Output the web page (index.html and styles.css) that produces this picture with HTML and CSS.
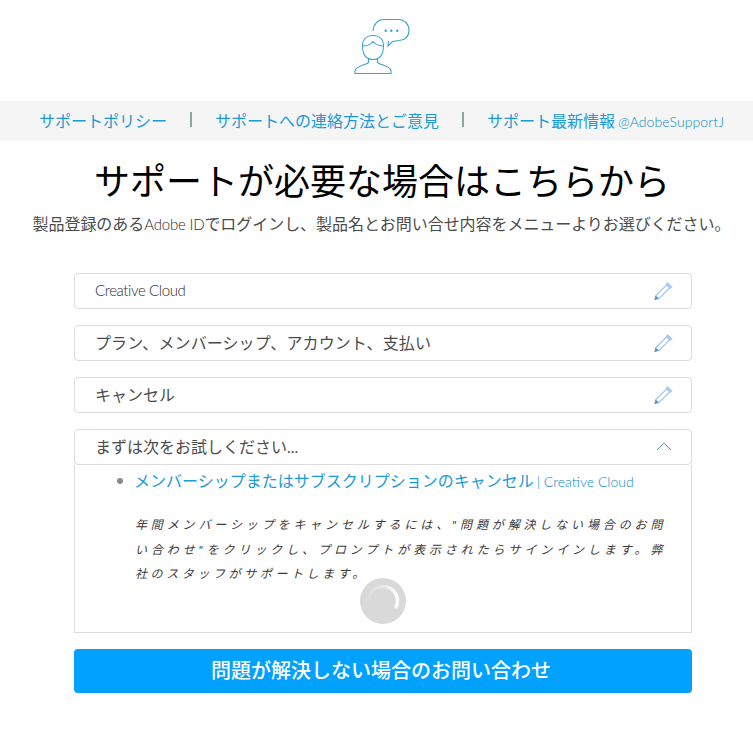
FILE: index.html
```html
<!DOCTYPE html>
<html lang="ja">
  <head>
    <meta charset="UTF-8" />
    <meta name="viewport" content="width=device-width, initial-scale=1.0" />
    <title>サポート</title>
    <link rel="stylesheet" href="styles.css">
  </head>
  <body>
    <div class="top-icon">
      <svg width="58" height="58" viewBox="0 0 58 58" fill="none" stroke="#3ba3d0" stroke-width="1.1">
        <!-- speech bubble -->
        <path d="M20 13 C20.5 6 25 1.5 31 1.5 L45 1.5 C52 1.5 56 6.5 56 12.5 C56 19 51.5 22.5 46 22.5 L39.5 23.5 L35 28 L35.5 23" />
        <!-- head and hair -->
        <path d="M14.5 40 C11 38 9.5 33 9.5 28 C9.5 21.5 13.5 17.5 20 17.5 C26.5 17.5 30.5 21.5 30.5 28 C30.5 33 29 38 25.5 40 C23 42 17 42 14.5 40 Z" />
        <path d="M9.5 28 C13.5 28 17.5 26.5 20 23.5 C22.5 26.5 26.5 28 30.5 28" />
        <!-- shoulders -->
        <path d="M15.5 41 L15.5 44.5 C12.5 47.5 2.5 47.5 2 53 L2 55.5 L38 55.5 L38 53 C37.5 47.5 27.5 47.5 24.5 44.5 L24.5 41" />
        <circle cx="32.7" cy="12.7" r="1.2" fill="#3ba3d0" stroke="none" />
        <circle cx="38.3" cy="12.7" r="1.2" fill="#3ba3d0" stroke="none" />
        <circle cx="44.3" cy="12.7" r="1.2" fill="#3ba3d0" stroke="none" />
      </svg>
    </div>

    <div class="nav-bar">
      <a class="nav-link">サポートポリシー</a>
      <span class="nav-sep"></span>
      <a class="nav-link">サポートへの連絡方法とご意見</a>
      <span class="nav-sep"></span>
      <a class="nav-link">サポート最新情報<span class="nav-small">@AdobeSupportJ</span></a>
    </div>

    <h1 class="title">サポートが必要な場合はこちらから</h1>
    <p class="subtitle">製品登録のある<span class="subtitle-latin">Adobe ID</span>でログインし、製品名とお問い合せ内容をメニューよりお選びください。</p>

    <div class="form">
      <div class="field">
        <span class="field-latin">Creative Cloud</span>
        <svg width="20" height="20"><use href="#pencil-icon" /></svg>
      </div>
      <div class="field">
        <span class="field-wide">プラン、メンバーシップ、アカウント、支払い</span>
        <svg width="20" height="20"><use href="#pencil-icon" /></svg>
      </div>
      <div class="field">
        <span>キャンセル</span>
        <svg width="20" height="20"><use href="#pencil-icon" /></svg>
      </div>

      <div class="accordion">
        <div class="field field-open">
          <span>まずは次をお試しください...</span>
          <svg width="16" height="9" viewBox="0 0 16 9" fill="none" stroke="#5f96d8" stroke-width="1"><path d="M1 8 L8 1 L15 8" /></svg>
        </div>
        <div class="panel">
          <ul class="result-list">
            <li class="result-item">
              <a class="result-link">メンバーシップまたはサブスクリプションのキャンセル<span class="result-small">| Creative Cloud</span></a>
              <p class="result-text">年間メンバーシップをキャンセルするには、"問題が解決しない場合のお問い合わせ"をクリックし、プロンプトが表示されたらサインインします。弊社のスタッフがサポートします。</p>
            </li>
          </ul>
          <div class="spinner">
            <svg width="46" height="46" viewBox="0 0 46 46" fill="none">
              <defs>
                <linearGradient id="arc-fade" x1="0" y1="0" x2="1" y2="0">
                  <stop offset="0" stop-color="#fff" stop-opacity="0.1" />
                  <stop offset="0.55" stop-color="#fff" stop-opacity="0.45" />
                  <stop offset="1" stop-color="#fff" stop-opacity="1" />
                </linearGradient>
              </defs>
              <path d="M8.5 22 C8.5 14 15 8.5 23 8.5 C31 8.5 37.5 15 37.5 23 C37.5 25.5 37 28 35.5 30" stroke="url(#arc-fade)" stroke-width="3.5" />
            </svg>
          </div>
        </div>
      </div>

      <button class="submit">問題が解決しない場合のお問い合わせ</button>
    </div>

    <svg class="defs" width="0" height="0">
      <symbol id="pencil-icon" viewBox="0 0 20 20">
        <path d="M3 14.5 L14 3.5 L17 6.5 L6 17.5 L2 18.5 Z" fill="#fff" stroke="#a3c4f0" stroke-width="1.2" />
        <path d="M14.5 1 L19.5 6 L17 8 L12.5 3.5 Z" fill="#a9c8f5" />
        <path d="M1.5 19 L2.5 14.5 L6 17.5 Z" fill="#5b8fd6" />
      </symbol>
    </svg>
  </body>
</html>
```

FILE: styles.css
```css
* {
  box-sizing: border-box;
}
body {
  margin: 0;
  background-color: white;
  font-family: "Lato", "Noto Sans CJK JP", sans-serif;
  color: #4b4b4b;
}
.top-icon {
  height: 101px;
  padding: 18px 0 0 11px;
  display: flex;
  justify-content: center;
}
.nav-bar {
  height: 40px;
  padding: 0 0 3px 10px;
  background-color: #f5f5f5;
  display: flex;
  justify-content: center;
  align-items: center;
  gap: 23px;
  font-size: 16px;
}
.nav-link {
  color: #1a9ad6;
  white-space: nowrap;
}
.nav-small {
  margin-left: 3px;
  font-size: 14px;
  font-weight: 300;
  letter-spacing: 0.1px;
  color: #0a8bca;
}
.nav-sep {
  width: 2px;
  height: 15px;
  background-color: #7fae9f;
}
.title {
  margin: 17px 0 0;
  padding-left: 11px;
  text-align: center;
  font-size: 36px;
  font-weight: 400;
  line-height: 46px;
  color: black;
}
.subtitle {
  margin: 8px 0 0;
  padding-left: 10px;
  text-align: center;
  font-size: 16px;
  line-height: 24px;
  letter-spacing: -0.05px;
}
.subtitle-latin {
  font-size: 15px;
  font-weight: 300;
  letter-spacing: -0.2px;
  color: #2c2c2c;
}
.form {
  margin: 37px 61px 0 74px;
  display: flex;
  flex-direction: column;
  gap: 16px;
}
.field {
  height: 36px;
  padding: 0 18px 3px 20px;
  border: 1px solid #dcdcdc;
  border-radius: 4px;
  display: flex;
  justify-content: space-between;
  align-items: center;
  font-size: 16px;
}
.field svg {
  margin-top: 3px;
}
.field-latin {
  font-size: 15px;
  font-weight: 300;
  letter-spacing: -0.4px;
  color: #2c2c2c;
}
.field-wide {
  letter-spacing: 0.1px;
}
.field-open {
  padding-right: 19px;
}
.field-open svg {
  margin-top: 2px;
}
.panel {
  position: relative;
  height: 168px;
  padding-top: 4px;
  border: 1px solid #dcdcdc;
  border-top: 0;
}
.result-list {
  margin: 0;
  padding: 0 25px 0 59px;
  list-style: none;
}
.result-item {
  position: relative;
}
.result-item::before {
  content: "";
  position: absolute;
  left: -17px;
  top: 9px;
  width: 6px;
  height: 6px;
  border-radius: 50%;
  background-color: #8a8a8a;
}
.result-link {
  color: #1a9ad6;
  font-size: 16px;
  line-height: 24px;
}
.result-small {
  margin-left: 3px;
  font-size: 14px;
  font-weight: 300;
  color: #0a8bca;
}
.result-text {
  margin: 19px 0 0 1px;
  font-size: 12px;
  font-style: italic;
  line-height: 24.5px;
  letter-spacing: 3.6px;
  text-align: justify;
  color: #3a3a3a;
}
.spinner {
  position: absolute;
  left: 285px;
  top: 113px;
  width: 46px;
  height: 46px;
  border-radius: 50%;
  background-color: #d9d9d9;
}
.submit {
  height: 44px;
  padding: 0 4px 4px 0;
  border: 0;
  border-radius: 4px;
  background-color: #00a1ff;
  color: white;
  font-family: inherit;
  font-size: 20px;
  font-weight: 500;
}
.defs {
  position: absolute;
}
```
